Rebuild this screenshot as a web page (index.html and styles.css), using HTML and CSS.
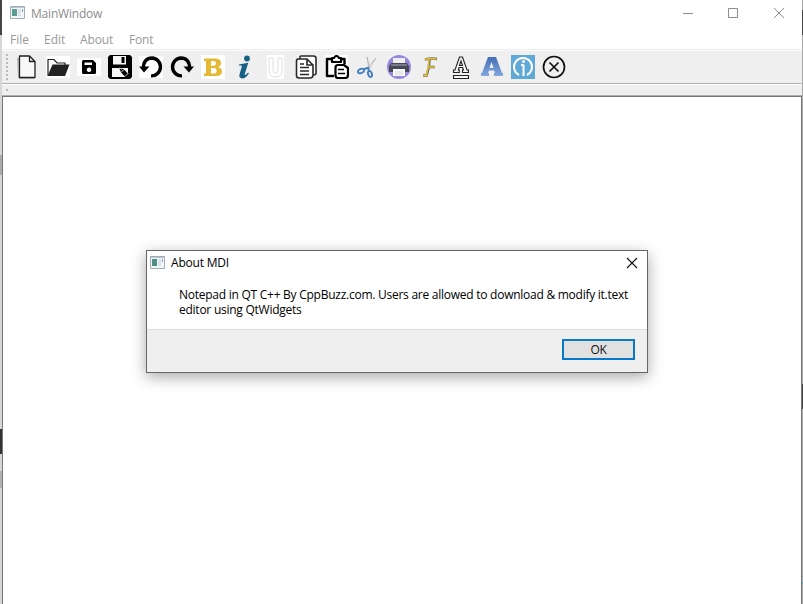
FILE: index.html
```
<!DOCTYPE html>
<html lang="en">
<head>
<meta charset="utf-8">
<title>MainWindow</title>
<link rel="stylesheet" href="styles.css">
</head>
<body>
<div class="desktop">
<div class="edge edge-left"></div>
<main class="window">
  <header class="titlebar">
    <svg class="appicon" width="15" height="13" viewBox="0 0 15 13"><path fill="#f3f6f7" stroke="#a3adb5" d="M.5.5h14v12H.5z"/><path fill="#b8c5cd" d="M1 1h13v1H1z"/><path fill="#5b9c94" d="M2 3h5v7H2z"/><path fill="#dce2ea" d="M8 3h3v7H8z"/><path fill="#8aa0b8" d="M12 3h1v3h-1z"/></svg>
    <span class="title">MainWindow</span>
    <svg class="controls" width="104" height="12" viewBox="0 0 104 12" fill="none" stroke="#8c8c8c"><path d="M1 6.500h10M46.500 1.500h9v9h-9zM92 1l10 10M102 1L92 11"/></svg>
  </header>
  <nav class="menu"><span class="m-file">File</span><span class="m-edit">Edit</span><span class="m-about">About</span><span class="m-font">Font</span></nav>
  <div class="toolbar">
    <i class="grip"></i>
    <div class="icons">
      <svg viewBox="0 0 24 24"><path fill="#bbb" d="M2 3h2v21h15v-1H3z"/><path fill="#f8f8f8" stroke="#222" stroke-width="1.300" stroke-linejoin="round" d="M4.500 1h10L20 6.500v16H4.500zM14.500 1v5.500H20"/></svg>
      <svg viewBox="0 0 24 24"><path fill="#fff" d="M0 1h24v22H0z"/><path fill="#fff" stroke="#222" stroke-width="1.200" d="M2 20.500V4.500h6l3 3.500h8v3"/><path fill="#222" d="M6.500 9.500h17L19 21H1.500z"/></svg>
      <svg viewBox="0 0 24 24"><path fill="#fff" d="M0 3h24v18H0z"/><path fill="#000" fill-rule="evenodd" d="M6.500 5H16l3 3v9.500q0 1.500-1.500 1.500h-11Q5 19 5 17.500v-11Q5 5 6.500 5zM7.500 7.500v2.500H15V7.500zm4.500 5a2.300 2.300 0 1 0 .01 0z"/></svg>
      <svg viewBox="0 0 24 24"><path fill="#000" d="M2 0h20l2 2v20l-2 2H2l-2-2V2z"/><path fill="#f7f7f7" d="M5 1h13v8.500H5zM4 13h16v9H4z"/><path fill="#000" d="M13.500 2h3v6h-3zM11 12.500l5 2 6 6-3 3-6-6z"/><path fill="none" stroke="#fff" stroke-width=".8" d="M13 17.500l3-3M17.500 21l3-3M11 13l3 1"/></svg>
      <svg viewBox="0 0 24 24"><path fill="#fff" d="M0 1h24v22H0z"/><path fill="none" stroke="#000" stroke-width="3.400" d="M4.500 13.500C4 6.500 8 3 13 3a8.800 8.800 0 1 1-1 17.900"/><path d="M0 11.500h10.500L5 17.500z"/></svg>
      <svg viewBox="0 0 24 24"><path fill="none" stroke="#000" stroke-width="3.400" d="M19.500 13.500C20 6.500 16 3 11 3a8.800 8.800 0 1 0 1 17.900"/><path d="M13.500 11.500H24L19 17.500z"/></svg>
      <svg viewBox="0 0 24 24"><path fill="#fff" d="M0 0h24v24H0z"/><path fill="#e6b935" fill-rule="evenodd" d="M3 3.500h11q6 0 6 4.500 0 3-3 4 4 1 4 4.500 0 4.500-6.500 4.500H3v-2.500h2V6H3zM10 6v4.800h2.500q2.500 0 2.500-2.400T12.500 6zM10 13v5.500h3q2.600 0 2.600-2.800T13 13z"/></svg>
      <svg viewBox="0 0 24 24" fill="#175f83"><circle cx="15" cy="3.500" r="2.900"/><path d="M7 9.500l9.300-1.700-3.500 11q-.5 2 1.300.8l2-2 .8.800Q13 24 9.500 23.300q-3-.6-1.900-4.300l2.200-7.200q.3-1.200-.8-1.300H7z"/></svg>
      <svg viewBox="0 0 24 24"><path fill="#fff" d="M4 0h17v24H4z"/><path fill="#fff" stroke="#dadada" stroke-width=".9" d="M6 3h4v12q0 3 2.500 3t2.500-3V3h4v13q0 6-6.500 6T6 16z"/></svg>
      <svg viewBox="0 0 24 24" fill="#fff" stroke="#292929" stroke-width="1.600"><path d="M6 4V2q0-1 1-1h12.500Q22 1 22 3.500V18q0 2-2.500 2"/><path d="M4 4h9l6 6v10q0 3-3 3H5q-2.500 0-2.500-2.500v-14Q2.500 4 4 4zM13 4v6h6"/><path d="M6 9h4M6 12.500h9M6 16h9M6 19.500h9"/></svg>
      <svg viewBox="0 0 24 24"><path fill="#fff" d="M1 0h22v24H1z"/><path fill="none" stroke="#000" stroke-width="2.400" stroke-linejoin="round" d="M7 4H2v17h7M16 4h3.500v5"/><path fill="#fff" stroke="#000" stroke-width="2.200" stroke-linejoin="round" d="M7 3h2q2.500-4 5 0h2v4H7zM13 10h6l4 3v7q0 3-3 3h-7q-2.500 0-2.500-3v-7.500Q10.500 10 13 10z"/><path stroke="#000" stroke-width="1.600" d="M13 14.500h6M13 18.500h7"/></svg>
      <svg viewBox="0 0 24 24"><path fill="#f8f8f8" stroke="#aaa" stroke-width=".7" d="M11 2l2 12 1-1zM20 3l-9 10 2 1z"/><g fill="none" stroke="#467fc0" stroke-width="1.900"><ellipse cx="5" cy="16" rx="3.200" ry="2" transform="rotate(-25 5 16)"/><ellipse cx="14" cy="19" rx="1.900" ry="3" transform="rotate(-20 14 19)"/><path d="M8 14l4-1 1 3"/></g></svg>
      <svg viewBox="0 0 24 24"><circle cx="12" cy="12" r="12" fill="#9788df"/><path fill="#eee" d="M6 3h12v6H6z"/><path fill="#484958" d="M4 8h16l2 3v6H2v-6z"/><path fill="#777b8b" d="M4 9h16v2H4z"/><path fill="#fafafa" d="M6 14h12v7H6z"/><path stroke="#cfcfd5" stroke-width=".8" d="M8 17h8M8 19h8"/></svg>
      <svg viewBox="0 0 24 24"><path fill="none" stroke="#65614f" stroke-width="2.500" d="M7 4.500q6-1.500 12-.5M11.500 4.500c0 6-1 11-3 16M10 12h7M5 20.500h5"/><path fill="none" stroke="#e2c43c" stroke-width="1.500" d="M6.500 4.500q6-1.500 12-.5M11 4.500c0 6-1 11-3 16M10 12h7M5 20.500h5"/></svg>
      <svg viewBox="0 0 24 24" fill="#f5f5f5" stroke="#222" stroke-width="1.100"><path d="M4.500 20.500h15v3h-15zM4.500 15H6l4.500-13h3L18 15h1.500v2.500h-6V15h1l-.8-2.500H10L9.300 15h1v2.500H4.500zM12 6l-1.500 4.500h3z"/></svg>
      <svg viewBox="0 0 24 24"><defs><linearGradient id="blueA" x1="0" y1="0" x2="0" y2="1"><stop stop-color="#426db7"/><stop offset="1" stop-color="#83a9dc"/></linearGradient></defs><path fill="url(#blueA)" fill-rule="evenodd" d="M8 2h8l6 16h1v3h-9v-3h1l-1-2.500H9L8 18h1v3H1v-3h1zM11.500 7L9.500 13h4z"/></svg>
      <svg viewBox="0 0 24 24"><path fill="#5fa9d7" d="M0 0h24v24H0z"/><path fill="none" stroke="#fff" stroke-width="2" d="M8 20a9 9 0 1 1 8 0M12.500 10v11M10 10h3"/><circle cx="12.500" cy="6.500" r="1.500" fill="#fff"/></svg>
      <svg viewBox="0 0 24 24" fill="none" stroke="#111" stroke-width="1.700"><circle cx="12" cy="12" r="10.500"/><path d="M7.500 7.500l9 9M16.500 7.500l-9 9"/></svg>
    </div>
  </div>
  <div class="strip"><i></i></div>
  <section class="editor"></section>
</main>
<div class="edge edge-right"></div>
</div>
<div class="dialog" role="dialog">
  <div class="dialog-title">
    <svg class="appicon" width="15" height="13" viewBox="0 0 15 13"><path fill="#f3f6f7" stroke="#a3adb5" d="M.5.5h14v12H.5z"/><path fill="#b8c5cd" d="M1 1h13v1H1z"/><path fill="#498f87" d="M2 3h5v7H2z"/><path fill="#dce2ea" d="M8 3h3v7H8z"/><path fill="#8aa0b8" d="M12 3h1v3h-1z"/></svg>
    <span class="title">About MDI</span>
    <svg class="close" width="12" height="12" viewBox="0 0 12 12" stroke="#111" stroke-width="1.100"><path d="M1 1l10 10M11 1L1 11"/></svg>
  </div>
  <div class="message"><div class="line-one">Notepad in QT C++ By CppBuzz.com. Users are allowed to download &amp; modify it.text</div><div class="line-two">editor using QtWidgets</div></div>
  <div class="actions"><button>OK</button></div>
</div>
</body>
</html>
```
FILE: styles.css
```
* { box-sizing: border-box; }
body { margin: 0; overflow: hidden; background: #fff; font: 12px "Open Sans", "Noto Sans", sans-serif; }
.desktop { display: grid; grid-template-columns: 2px 800px 1px; height: 604px; }
.edge-left { background: linear-gradient(#454545 0 35px, #d6d6d6 35px 155px, #aaa 155px 175px, #d6d6d6 175px 429px, #333 429px 454px, #d6d6d6 454px 471px, #b0b0b0 471px 488px, #d6d6d6 488px); }
.edge-right { background: linear-gradient(#aaa 0 10px, #444 10px 35px, #aaa 35px 384px, #444 384px 409px, #aaa 409px 576px, #64a2c5 576px 577px, #aaa 577px 582px, #64a2c5 582px 584px, #aaa 584px); }
.window { display: flex; flex-direction: column; min-width: 0; background: #fff; }
.titlebar { height: 28px; flex: none; display: flex; align-items: center; padding-left: 8px; color: #8c8c8c; }
.appicon { flex: none; display: block; margin-top: -3px; }
.titlebar .title { margin: -2px 0 0 6px; letter-spacing: -.2px; }
.controls { margin: -2px 16px 0 auto; }
.menu { height: 22px; flex: none; display: flex; color: #999; line-height: 24px; padding-left: 8px; border-bottom: 1px solid #eee; }
.menu span { white-space: nowrap; }
.m-file { width: 34px; }
.m-edit { width: 36px; }
.m-about { width: 49px; letter-spacing: -.1px; }
.m-font { letter-spacing: -.15px; }
.toolbar { height: 34px; flex: none; display: flex; background: #efefef; border-top: 1px solid #fafafa; border-bottom: 1px solid #b0b0b0; }
.grip { width: 2px; height: 27px; margin: 3px 7px 0 4px; background: repeating-linear-gradient(#bbb 0 2px, #efefef 2px 4px); }
.icons { display: flex; gap: 7px; padding: 4px 0 0; }
.icons svg { width: 24px; height: 24px; display: block; }
.strip { height: 12px; flex: none; background: #efefef; border-top: 1px solid #fff; border-bottom: 1px solid #b0b0b0; }
.strip i { display: block; width: 2px; height: 2px; background: #bbb; margin: 4px 0 0 4px; }
.editor { flex: 1; border: solid #777; border-width: 1px 1px 0; }
.dialog { position: absolute; left: 146px; top: 250px; width: 502px; height: 123px; border: 1px solid #666; background: #fff; display: flex; flex-direction: column; box-shadow: 0 4px 14px rgba(0,0,0,.34); color: #000; }
.dialog-title { height: 25px; display: flex; align-items: center; padding: 0 9px 0 3px; }
.dialog-title .appicon { margin-top: -2px; }
.dialog-title .title { margin: -2px 0 0 6px; letter-spacing: -.2px; }
.close { margin: -2px 0 0 auto; }
.message { height: 53px; padding: 11px 0 0 32px; line-height: 15px; white-space: nowrap; }
.line-one { letter-spacing: -.255px; }
.line-two { letter-spacing: -.25px; }
.actions { flex: 1; background: #efefef; border-top: 1px solid #dedede; display: flex; justify-content: flex-end; padding: 9px 12px 0 0; }
button { width: 73px; height: 21px; padding: 0; border: 2px solid #0878c8; background: #e1e1e1; color: #111; font: inherit; line-height: 17px; letter-spacing: -.3px; }
```
